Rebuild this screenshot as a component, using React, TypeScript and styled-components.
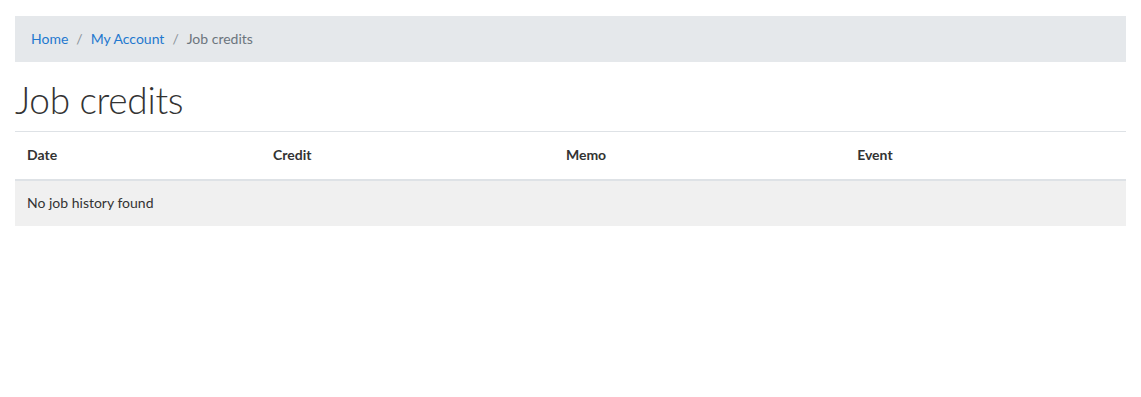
import styled, { createGlobalStyle } from 'styled-components'

const GlobalStyle = createGlobalStyle`
  html, body {
    margin: 0;
    padding: 0;
    background: #fff;
  }
  body {
    font-family: Lato, "Liberation Sans", sans-serif;
    color: #212529;
  }
`

const Page = styled.div`
  padding: 16px 15px;
`

const Breadcrumb = styled.nav`
  display: flex;
  align-items: center;
  height: 46px;
  box-sizing: border-box;
  padding: 0 16px 2px;
  background: #e5e8eb;
  font-size: 14px;
`

const Crumb = styled.a`
  color: #1f78cf;
  text-decoration: none;
`

const Current = styled.span`
  color: #6c757d;
`

const Divider = styled.span`
  color: #8a9299;
  padding: 0 8px;
`

const Title = styled.h1`
  margin: 0;
  height: 69px;
  box-sizing: border-box;
  padding-top: 5px;
  display: flex;
  align-items: center;
  font-size: 37px;
  font-weight: 300;
  color: #333;
  letter-spacing: -0.3px;
`

const Table = styled.table`
  width: 100%;
  border-collapse: collapse;
  font-size: 14px;
`

const HeadCell = styled.th<{ $width: number }>`
  width: ${({ $width }) => $width}px;
  text-align: left;
  font-weight: 700;
  height: 45px;
  padding: 0 12px 2px;
  border-top: 1px solid #dee2e6;
  border-bottom: 2px solid #dee2e6;
  color: #333;
`

const BodyRow = styled.tr`
  background: #f0f0f0;
`

const Cell = styled.td`
  height: 43px;
  padding: 0 12px 2px;
  color: #333;
`

const columns = [
  { label: 'Date', width: 243 },
  { label: 'Credit', width: 294 },
  { label: 'Memo', width: 292 },
  { label: 'Event', width: 281 },
]

function App() {
  return (
    <Page>
      <GlobalStyle />
      <Breadcrumb>
        <Crumb href="#">Home</Crumb>
        <Divider>/</Divider>
        <Crumb href="#">My Account</Crumb>
        <Divider>/</Divider>
        <Current>Job credits</Current>
      </Breadcrumb>
      <Title>Job credits</Title>
      <Table>
        <thead>
          <tr>
            {columns.map((col) => (
              <HeadCell key={col.label} $width={col.width}>
                {col.label}
              </HeadCell>
            ))}
          </tr>
        </thead>
        <tbody>
          <BodyRow>
            <Cell colSpan={4}>No job history found</Cell>
          </BodyRow>
        </tbody>
      </Table>
    </Page>
  )
}

export default App
